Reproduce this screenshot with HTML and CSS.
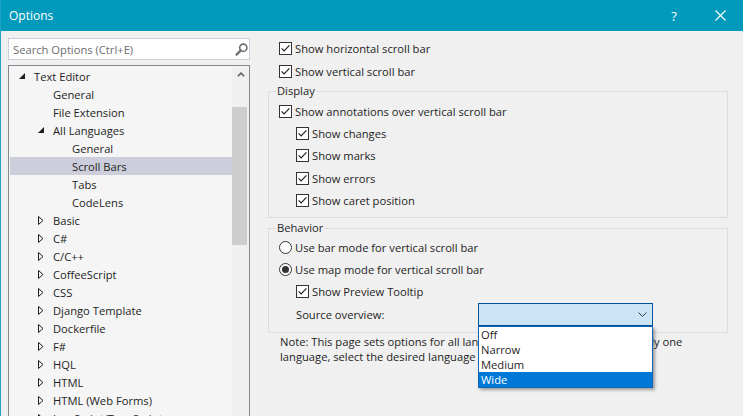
FILE: index.html
```html
<!DOCTYPE html>
<html>
<head>
<meta charset="utf-8">
<link rel="stylesheet" href="styles.css">
</head>
<body>
<div class="window">
  <header class="titlebar">
    <span class="title">Options</span>
    <div class="caption">
      <span class="cbtn help">?</span>
      <span class="cbtn close"><svg width="11" height="11" viewBox="0 0 11 11"><path d="M0.5 0.5 L10.5 10.5 M10.5 0.5 L0.5 10.5" stroke="#fff" stroke-width="1.1" fill="none"/></svg></span>
    </div>
  </header>
  <div class="main">
    <aside class="left">
      <div class="search">
        <span class="placeholder">Search Options (Ctrl+E)</span>
        <svg class="mag" width="13" height="13" viewBox="0 0 13 13"><circle cx="8.3" cy="4.7" r="3.6" fill="none" stroke="#6f6f6f" stroke-width="1.6"/><path d="M5.8 7.4 L1.6 11.6" stroke="#6f6f6f" stroke-width="2.2" stroke-linecap="round"/></svg>
      </div>
      <div class="tree">
        <ul class="items">
          <li class="item l0"><span class="tog"><svg width="6" height="6" viewBox="0 0 6 6"><path d="M6 0 L6 6 L0 6 Z" fill="#1e1e1e"/></svg></span>Text Editor</li>
          <li class="item l1"><span class="tog"></span>General</li>
          <li class="item l1"><span class="tog"></span>File Extension</li>
          <li class="item l1"><span class="tog"><svg width="6" height="6" viewBox="0 0 6 6"><path d="M6 0 L6 6 L0 6 Z" fill="#1e1e1e"/></svg></span>All Languages</li>
          <li class="item l2"><span class="tog"></span>General</li>
          <li class="item l2 sel"><span class="tog"></span>Scroll Bars</li>
          <li class="item l2"><span class="tog"></span>Tabs</li>
          <li class="item l2"><span class="tog"></span>CodeLens</li>
          <li class="item l1"><span class="tog"><svg width="6" height="9" viewBox="0 0 6 9"><path d="M0.5 0.5 L5 4.5 L0.5 8.5 Z" fill="none" stroke="#1e1e1e"/></svg></span>Basic</li>
          <li class="item l1"><span class="tog"><svg width="6" height="9" viewBox="0 0 6 9"><path d="M0.5 0.5 L5 4.5 L0.5 8.5 Z" fill="none" stroke="#1e1e1e"/></svg></span>C#</li>
          <li class="item l1"><span class="tog"><svg width="6" height="9" viewBox="0 0 6 9"><path d="M0.5 0.5 L5 4.5 L0.5 8.5 Z" fill="none" stroke="#1e1e1e"/></svg></span>C/C++</li>
          <li class="item l1"><span class="tog"><svg width="6" height="9" viewBox="0 0 6 9"><path d="M0.5 0.5 L5 4.5 L0.5 8.5 Z" fill="none" stroke="#1e1e1e"/></svg></span>CoffeeScript</li>
          <li class="item l1"><span class="tog"><svg width="6" height="9" viewBox="0 0 6 9"><path d="M0.5 0.5 L5 4.5 L0.5 8.5 Z" fill="none" stroke="#1e1e1e"/></svg></span>CSS</li>
          <li class="item l1"><span class="tog"><svg width="6" height="9" viewBox="0 0 6 9"><path d="M0.5 0.5 L5 4.5 L0.5 8.5 Z" fill="none" stroke="#1e1e1e"/></svg></span>Django Template</li>
          <li class="item l1"><span class="tog"><svg width="6" height="9" viewBox="0 0 6 9"><path d="M0.5 0.5 L5 4.5 L0.5 8.5 Z" fill="none" stroke="#1e1e1e"/></svg></span>Dockerfile</li>
          <li class="item l1"><span class="tog"><svg width="6" height="9" viewBox="0 0 6 9"><path d="M0.5 0.5 L5 4.5 L0.5 8.5 Z" fill="none" stroke="#1e1e1e"/></svg></span>F#</li>
          <li class="item l1"><span class="tog"><svg width="6" height="9" viewBox="0 0 6 9"><path d="M0.5 0.5 L5 4.5 L0.5 8.5 Z" fill="none" stroke="#1e1e1e"/></svg></span>HQL</li>
          <li class="item l1"><span class="tog"><svg width="6" height="9" viewBox="0 0 6 9"><path d="M0.5 0.5 L5 4.5 L0.5 8.5 Z" fill="none" stroke="#1e1e1e"/></svg></span>HTML</li>
          <li class="item l1"><span class="tog"><svg width="6" height="9" viewBox="0 0 6 9"><path d="M0.5 0.5 L5 4.5 L0.5 8.5 Z" fill="none" stroke="#1e1e1e"/></svg></span>HTML (Web Forms)</li>
          <li class="item l1"><span class="tog"><svg width="6" height="9" viewBox="0 0 6 9"><path d="M0.5 0.5 L5 4.5 L0.5 8.5 Z" fill="none" stroke="#1e1e1e"/></svg></span>JavaScript/TypeScript</li>
        </ul>
        <div class="vscroll">
          <div class="up"><svg width="8" height="5" viewBox="0 0 8 5"><path d="M0.8 4.3 L4 1.2 L7.2 4.3" fill="none" stroke="#5f5f5f" stroke-width="1.6"/></svg></div>
          <div class="thumb"></div>
        </div>
      </div>
    </aside>
    <section class="right">
      <div class="row top"><svg class="cb" viewBox="0 0 13 13"><rect x="0.5" y="0.5" width="12" height="12" fill="#fff" stroke="#333"/><path d="M2.6 6.4 L5.1 8.9 L10.4 3.4" fill="none" stroke="#222" stroke-width="1.2"/></svg><span>Show horizontal scroll bar</span></div>
      <div class="row top"><svg class="cb" viewBox="0 0 13 13"><rect x="0.5" y="0.5" width="12" height="12" fill="#fff" stroke="#333"/><path d="M2.6 6.4 L5.1 8.9 L10.4 3.4" fill="none" stroke="#222" stroke-width="1.2"/></svg><span>Show vertical scroll bar</span></div>
      <fieldset class="group display">
        <legend>Display</legend>
        <div class="row first"><svg class="cb" viewBox="0 0 13 13"><rect x="0.5" y="0.5" width="12" height="12" fill="#fff" stroke="#333"/><path d="M2.6 6.4 L5.1 8.9 L10.4 3.4" fill="none" stroke="#222" stroke-width="1.2"/></svg><span>Show annotations over vertical scroll bar</span></div>
        <div class="row sub"><svg class="cb" viewBox="0 0 13 13"><rect x="0.5" y="0.5" width="12" height="12" fill="#fff" stroke="#333"/><path d="M2.6 6.4 L5.1 8.9 L10.4 3.4" fill="none" stroke="#222" stroke-width="1.2"/></svg><span>Show changes</span></div>
        <div class="row sub"><svg class="cb" viewBox="0 0 13 13"><rect x="0.5" y="0.5" width="12" height="12" fill="#fff" stroke="#333"/><path d="M2.6 6.4 L5.1 8.9 L10.4 3.4" fill="none" stroke="#222" stroke-width="1.2"/></svg><span>Show marks</span></div>
        <div class="row sub"><svg class="cb" viewBox="0 0 13 13"><rect x="0.5" y="0.5" width="12" height="12" fill="#fff" stroke="#333"/><path d="M2.6 6.4 L5.1 8.9 L10.4 3.4" fill="none" stroke="#222" stroke-width="1.2"/></svg><span>Show errors</span></div>
        <div class="row sub"><svg class="cb" viewBox="0 0 13 13"><rect x="0.5" y="0.5" width="12" height="12" fill="#fff" stroke="#333"/><path d="M2.6 6.4 L5.1 8.9 L10.4 3.4" fill="none" stroke="#222" stroke-width="1.2"/></svg><span>Show caret position</span></div>
      </fieldset>
      <fieldset class="group behavior">
        <legend>Behavior</legend>
        <div class="row r1"><svg class="cb" viewBox="0 0 13 13"><circle cx="6.5" cy="6.5" r="6" fill="#fff" stroke="#333"/></svg><span>Use bar mode for vertical scroll bar</span></div>
        <div class="row r2"><svg class="cb" viewBox="0 0 13 13"><circle cx="6.5" cy="6.5" r="6" fill="#fff" stroke="#333"/><circle cx="6.5" cy="6.5" r="3.5" fill="#333"/></svg><span>Use map mode for vertical scroll bar</span></div>
        <div class="row sub r3"><svg class="cb" viewBox="0 0 13 13"><rect x="0.5" y="0.5" width="12" height="12" fill="#fff" stroke="#333"/><path d="M2.6 6.4 L5.1 8.9 L10.4 3.4" fill="none" stroke="#222" stroke-width="1.2"/></svg><span>Show Preview Tooltip</span></div>
        <div class="row sub r4">
          <span class="lbl">Source overview:</span>
          <div class="combo">
            <svg class="chev" width="9" height="5" viewBox="0 0 9 5"><path d="M0.5 0.5 L4.5 4.5 L8.5 0.5" fill="none" stroke="#3c3c3c"/></svg>
            <ul class="droplist">
              <li>Off</li>
              <li>Narrow</li>
              <li>Medium</li>
              <li class="cur">Wide</li>
            </ul>
          </div>
        </div>
      </fieldset>
      <p class="note">Note: This page sets options for all languages. To change options for only one<br>language, select the desired language from the tree on the left.</p>
    </section>
  </div>
</div>
</body>
</html>
```
FILE: styles.css
```css
* { box-sizing: border-box; }
html, body { margin: 0; padding: 0; }
body {
  width: 743px;
  height: 416px;
  overflow: hidden;
  background: #f0f0f0;
  font-family: "Open Sans", "Noto Sans", sans-serif;
  font-size: 11.2px;
  color: #1e1e1e;
}
.window {
  height: 416px;
  border-left: 1px solid #1ea4c6;
  display: flex;
  flex-direction: column;
}
.titlebar {
  height: 31px;
  flex-shrink: 0;
  background: #0199bc;
  color: #fff;
  display: flex;
  align-items: center;
}
.title { margin-left: 8px; font-size: 12px; }
.caption { margin-left: auto; display: flex; height: 100%; }
.cbtn { width: 46px; display: flex; align-items: center; justify-content: center; }
.help { font-size: 13px; }

.main { display: flex; flex: 1; min-height: 0; }
.left {
  width: 242px;
  flex-shrink: 0;
  margin-left: 7px;
  padding-top: 7px;
  display: flex;
  flex-direction: column;
}
.search {
  height: 22px;
  flex-shrink: 0;
  background: #fff;
  border: 1px solid #cccedb;
  display: flex;
  align-items: center;
  padding-left: 4px;
}
.placeholder { color: #6d6d6d; }
.mag { margin-left: auto; margin-right: 1px; }

.tree {
  margin-top: 5px;
  height: 360px;
  flex-shrink: 0;
  border: 1px solid #828790;
  background: #f5f5f5;
  display: flex;
}
.items {
  list-style: none;
  margin: 0;
  padding: 1px 0 0 1px;
  flex: 1;
  overflow: hidden;
}
.item {
  height: 18px;
  display: flex;
  align-items: center;
  white-space: nowrap;
}
.l0 { padding-left: 9px; }
.l1 { padding-left: 28px; }
.l2 { padding-left: 47px; }
.tog { width: 15px; flex-shrink: 0; display: flex; align-items: center; }
.sel { background: #cccedb; }

.vscroll { width: 17px; flex-shrink: 0; background: #f0f0f0; }
.up { height: 17px; display: flex; align-items: center; justify-content: center; }
.thumb { margin-top: 24px; width: 15px; height: 138px; background: #cdcdcd; }

.right { flex: 1; padding: 6px 15px 0 18px; }
.row { height: 23px; display: flex; align-items: center; padding-left: 10px; white-space: nowrap; }
.row.top { padding-left: 11px; }
.cb { width: 13px; height: 13px; flex-shrink: 0; margin-right: 3px; }
.group {
  margin: 0;
  padding: 0 0 5px 0;
  min-width: 0;
  border: 1px solid #dcdcdc;
}
.group legend { padding: 0 1px; margin-left: 7px; line-height: 16px; }
.row.sub { padding-left: 27px; }
.display .first { height: 22px; margin-top: 1px; }
.display .sub { height: 22.5px; }
.behavior { margin-top: 2px; padding-bottom: 6px; }
.behavior .r1 { height: 21px; margin-top: 1px; }
.behavior .r2 { height: 22px; }
.behavior .r3 { height: 23px; }
.behavior .r4 { height: 23px; }
.lbl { width: 182px; flex-shrink: 0; }
.combo {
  position: relative;
  width: 175px;
  height: 23px;
  background: #cce4f7;
  border: 1px solid #005499;
  display: flex;
  align-items: center;
  justify-content: flex-end;
  padding-right: 5px;
}
.droplist {
  position: absolute;
  top: calc(100% + 1px);
  left: -1px;
  width: 175px;
  margin: 0;
  padding: 0;
  list-style: none;
  background: #fff;
  border: 1px solid #1464b4;
  box-shadow: 2px 2px 3px rgba(0,0,0,0.35);
  z-index: 2;
}
.droplist li { height: 15px; line-height: 15px; padding-left: 2px; }
.droplist .cur { background: #0078d7; color: #fff; }
.note { margin: 1px 0 0 0; padding-left: 12px; line-height: 15px; white-space: nowrap; }
```
